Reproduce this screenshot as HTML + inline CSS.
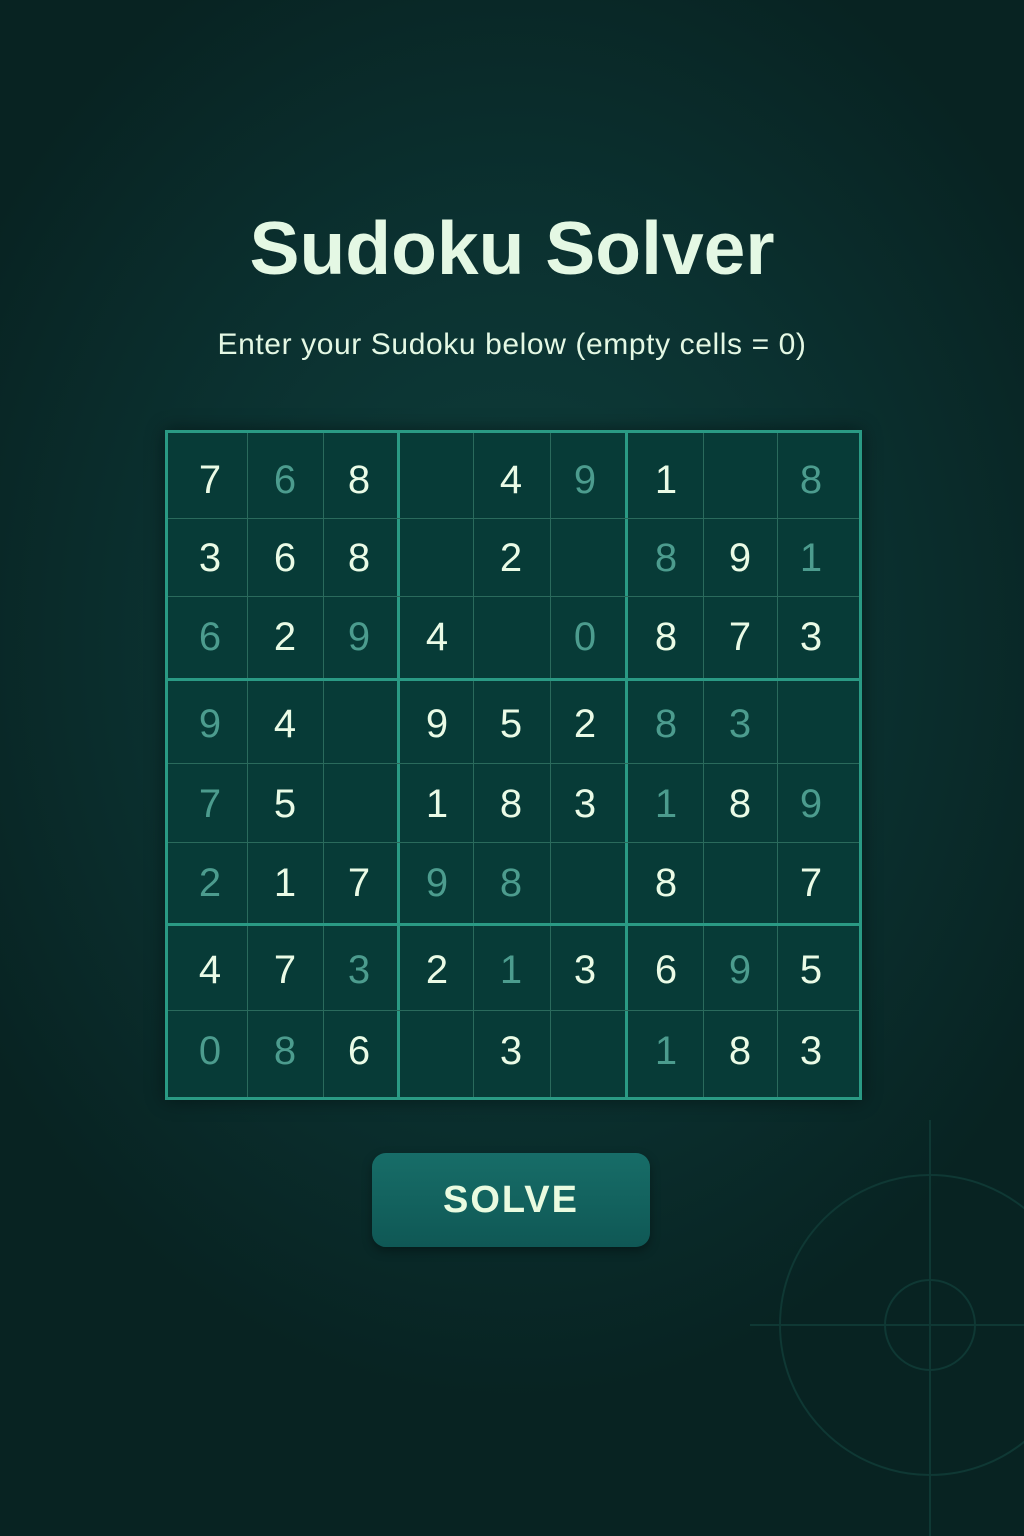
<!DOCTYPE html>
<html><head><meta charset="utf-8"><style>
html,body{margin:0;padding:0;}
body{width:1024px;height:1536px;position:relative;overflow:hidden;font-family:"Liberation Sans",sans-serif;
background:radial-gradient(ellipse 620px 760px at 512px 640px,#0f3f3c 0%,#0b3130 55%,#082322 100%);}
.t{position:absolute;left:0;width:1024px;text-align:center;color:#e4f8e4;}
#grid{position:absolute;left:165px;top:430px;width:691px;height:664px;border:3px solid #2a9a84;background:#073b37;box-shadow:0 0 18px rgba(0,0,0,.45);}
.l{position:absolute;background:#2a6a5c;}
.v{width:1px;top:0;height:664px;}
.h{height:1px;left:0;width:691px;}
.V{width:3px;top:0;height:664px;background:#2a9a84;}
.H{height:3px;left:0;width:691px;background:#2a9a84;}
.d{position:absolute;width:60px;margin-left:-30px;text-align:center;font-size:40px;line-height:40px;color:#eafbe6;}
.f{color:#4c9c8e;}
#btn{position:absolute;left:372px;top:1153px;width:278px;height:94px;border-radius:14px;background:linear-gradient(#176d68,#0f5855);box-shadow:0 4px 10px rgba(0,0,0,.35);color:#eafbe0;font-weight:bold;font-size:38px;letter-spacing:2px;text-align:center;line-height:94px;}
</style></head><body>
<div class="t" style="top:206px;font-size:75px;font-weight:bold;line-height:84px;">Sudoku Solver</div>
<div class="t" style="top:327px;font-size:30px;line-height:36px;letter-spacing:0.6px;">Enter your Sudoku below (empty cells = 0)</div>
<div id="grid">
<div class="l v" style="left:79px"></div><div class="l v" style="left:155px"></div>
<div class="l v" style="left:305px"></div><div class="l v" style="left:382px"></div>
<div class="l v" style="left:535px"></div><div class="l v" style="left:609px"></div>
<div class="l V" style="left:229px"></div><div class="l V" style="left:457px"></div>
<div class="l h" style="top:85px"></div><div class="l h" style="top:163px"></div>
<div class="l h" style="top:330px"></div><div class="l h" style="top:409px"></div>
<div class="l h" style="top:577px"></div>
<div class="l H" style="top:245px"></div><div class="l H" style="top:490px"></div>
</div>
<div id="digits"></div>
<script>
var cx=[210,285,359,437,511,585,666,740,811],cy=[480,558,637,724,804,883,970,1051];
var rows=["7w 6f 8w _ 4w 9f 1w _ 8f","3w 6w 8w _ 2w _ 8f 9w 1f","6f 2w 9f 4w _ 0f 8w 7w 3w","9f 4w _ 9w 5w 2w 8f 3f _","7f 5w _ 1w 8w 3w 1f 8w 9f","2f 1w 7w 9f 8f _ 8w _ 7w","4w 7w 3f 2w 1f 3w 6w 9f 5w","0f 8f 6w _ 3w _ 1f 8w 3w"];
var h="";rows.forEach(function(r,i){r.split(" ").forEach(function(c,j){if(c!="_")h+='<div class="d'+(c[1]=="f"?" f":"")+'" style="left:'+cx[j]+'px;top:'+(cy[i]-20)+'px">'+c[0]+'</div>';});});
document.getElementById("digits").innerHTML=h;
</script>
<div id="btn">SOLVE</div>
<svg style="position:absolute;left:740px;top:1100px" width="284" height="436"><g stroke="#0f3834" stroke-width="2" fill="none"><circle cx="190" cy="225" r="150"/><circle cx="190" cy="225" r="45"/><line x1="190" y1="20" x2="190" y2="436"/><line x1="10" y1="225" x2="284" y2="225"/></g></svg>
</body></html>
